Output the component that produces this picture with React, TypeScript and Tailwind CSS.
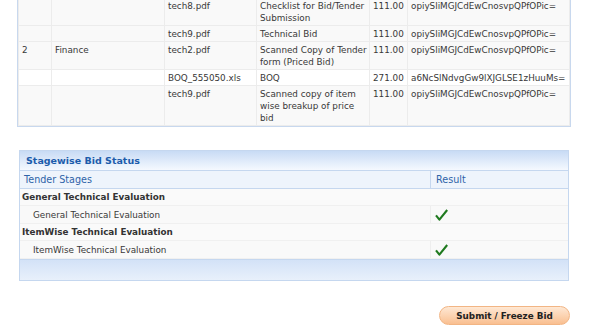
import React from "react";

const FONT = { fontFamily: '"DejaVu Sans", Verdana, sans-serif' };

type DocRow = {
  sno?: string;
  dept?: string;
  file: string;
  desc: string[];
  size: string;
  hash: string;
};

const HASH_A = "opiySliMGJCdEwCnosvpQPfOPic=";
const HASH_B = "a6NcSlNdvgGw9lXJGLSE1zHuuMs=";

const DOCS: DocRow[] = [
  { file: "tech8.pdf", desc: ["Checklist for Bid/Tender", "Submission"], size: "111.00", hash: HASH_A },
  { file: "tech9.pdf", desc: ["Technical Bid"], size: "111.00", hash: HASH_A },
  { sno: "2", dept: "Finance", file: "tech2.pdf", desc: ["Scanned Copy of Tender", "form (Priced Bid)"], size: "111.00", hash: HASH_A },
  { file: "BOQ_555050.xls", desc: ["BOQ"], size: "271.00", hash: HASH_B },
  { file: "tech9.pdf", desc: ["Scanned copy of item", "wise breakup of price", "bid"], size: "111.00", hash: HASH_A },
];

const STAGES = [
  { group: "General Technical Evaluation", item: "General Technical Evaluation" },
  { group: "ItemWise Technical Evaluation", item: "ItemWise Technical Evaluation" },
];

function Check() {
  return (
    <svg width="13" height="12" viewBox="0 0 13 12">
      <path d="M1 6.3 L4.4 10.6 L12.2 1" fill="none" stroke="#1f7a1f" strokeWidth="2.1" strokeLinejoin="round" />
    </svg>
  );
}

export default function App() {
  const td = "border border-[#ececec] px-[3px] pt-[2px] pb-[1px] align-top whitespace-nowrap overflow-hidden";
  return (
    <div className="w-[606px] h-[333px] bg-white overflow-hidden text-[#383838] text-[8.8px] leading-[12px]" style={FONT}>
      {/* Uploaded documents (scrolled) */}
      <div className="ml-[17px] w-[554px] mt-[-3px] border-x border-b border-[#c8d8ee] bg-[#fafafa]">
        <table className="w-full border-collapse table-fixed">
          <colgroup>
            <col className="w-[33px]" />
            <col className="w-[113px]" />
            <col className="w-[92px]" />
            <col className="w-[113px]" />
            <col className="w-[38px]" />
            <col />
          </colgroup>
          <tbody>
            {DOCS.map((d, i) => (
              <tr key={i} className={i === 3 ? "bg-white" : "bg-[#f9f9f9]"}>
                <td className={td}>{d.sno}</td>
                <td className={td}>{d.dept}</td>
                <td className={td}>{d.file}</td>
                <td className={td}>
                  {d.desc.map((l) => (
                    <div key={l}>{l}</div>
                  ))}
                </td>
                <td className={td}>{d.size}</td>
                <td className={td}>{d.hash}</td>
              </tr>
            ))}
          </tbody>
        </table>
      </div>

      {/* Stagewise Bid Status */}
      <div className="ml-[19px] w-[550px] mt-[23px] border border-[#c5d7ef]">
        <div className="h-[19px] flex items-center pl-[6px] bg-gradient-to-b from-[#c8dbf5] to-[#f5f9fe] text-[#1c5cab] font-bold text-[9.5px]">
          Stagewise Bid Status
        </div>
        <div className="flex h-[19px] bg-[#eef4fc] border-y border-[#c5d7ef] text-[#2f63a8] text-[9.6px]">
          <div className="w-[411px] flex items-center pl-[4px] border-r border-[#c5d7ef]">Tender Stages</div>
          <div className="flex-1 flex items-center pl-[5px]">Result</div>
        </div>
        {STAGES.map((s) => (
          <React.Fragment key={s.group}>
            <div className="h-[17px] flex items-center pl-[2px] bg-[#fafafa] border-b border-[#f0f0f0] font-bold text-[#333]">
              {s.group}
            </div>
            <div className="flex h-[18px] bg-[#f9f9f9] border-b border-[#f0f0f0]">
              <div className="w-[411px] flex items-center pl-[13px] border-r border-[#eeeeee]">{s.item}</div>
              <div className="flex-1 flex items-center pl-[4px]">
                <Check />
              </div>
            </div>
          </React.Fragment>
        ))}
        <div className="h-[21px] bg-gradient-to-b from-[#d3e2f7] to-[#e8f0fb] border-t border-[#c5d7ef]" />
      </div>

      <div className="flex justify-end pr-[36px] mt-[25px]">
        <button className="w-[131px] h-[19px] rounded-full border border-[#f2b584] bg-gradient-to-b from-[#fee8d4] to-[#f9bf90] text-[#222] font-bold text-[8.8px] flex items-center justify-center">
          Submit / Freeze Bid
        </button>
      </div>
    </div>
  );
}
